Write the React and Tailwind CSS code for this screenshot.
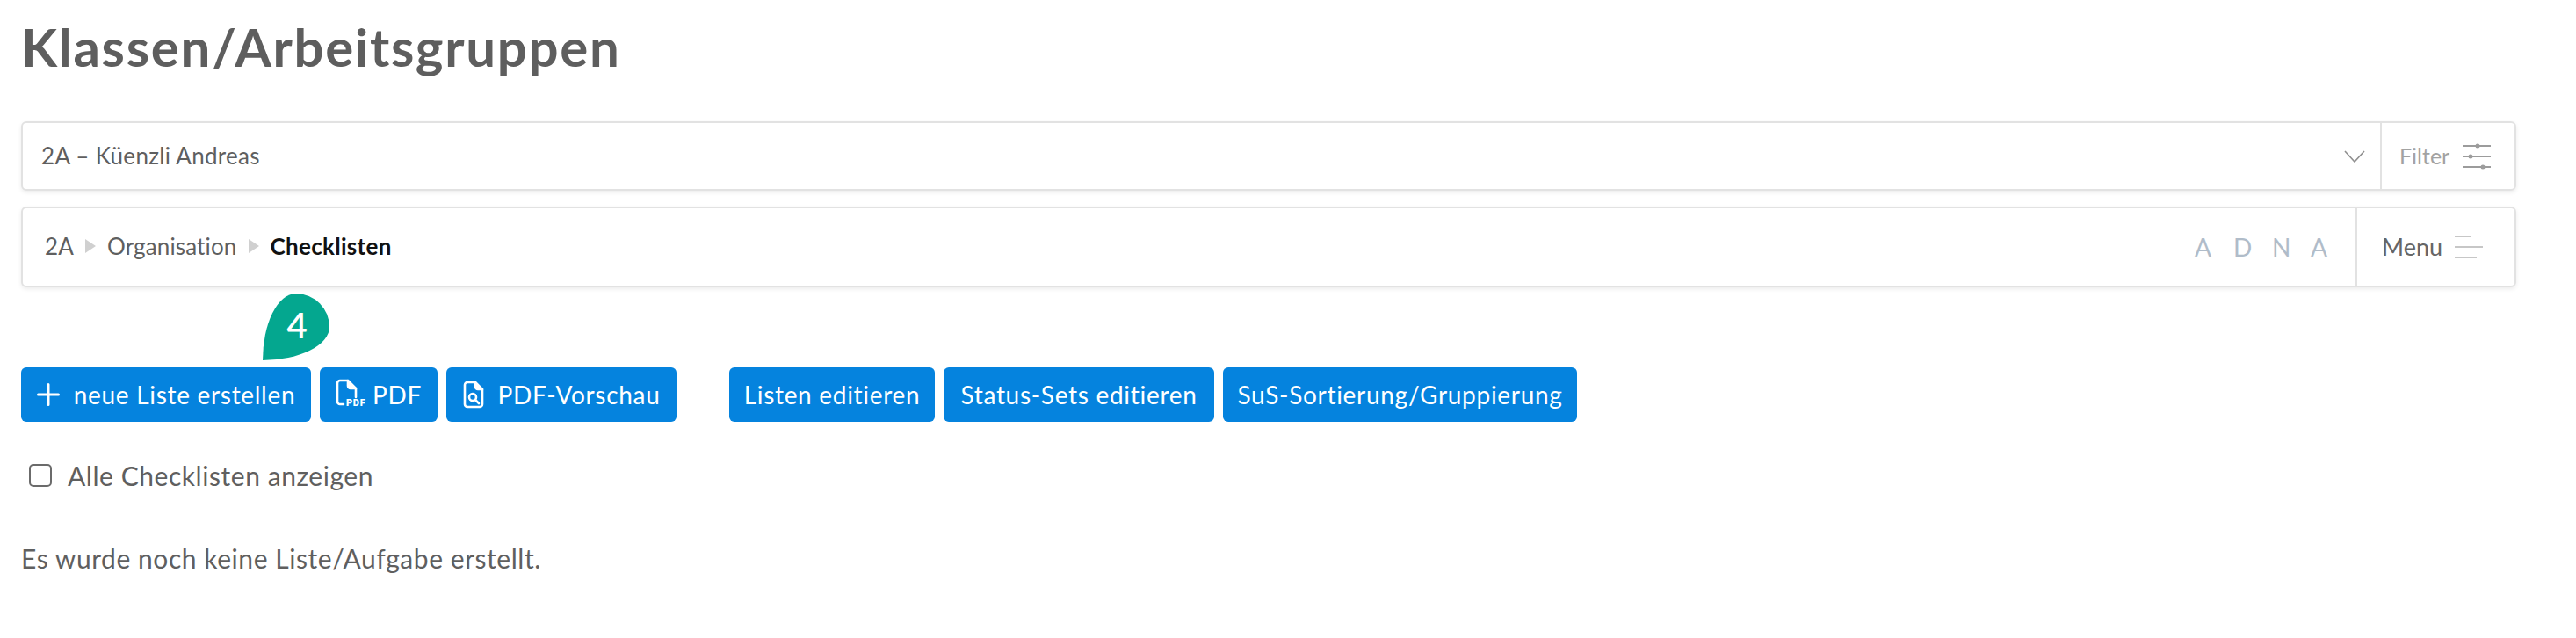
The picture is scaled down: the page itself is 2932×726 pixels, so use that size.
import React from "react";

const SANS = "font-['Lato','Liberation_Sans',sans-serif]";

const Btn = ({ w, gap = "gap-[9px]", children }) => (
  <button className={`flex h-[62px] ${w} ${gap} items-center justify-center rounded-[6px] bg-[#0583de] text-[28px] tracking-[0.7px] text-white`}>
    {children}
  </button>
);

const PdfIcon = () => (
  <svg width="36" height="38" viewBox="0 0 36 38" fill="none" stroke="white" strokeWidth="2.6" strokeLinejoin="round" strokeLinecap="round" className="shrink-0 overflow-visible">
    <path d="M9 30H5a3 3 0 0 1-3-3V6a3 3 0 0 1 3-3h9l9 9v10" />
    <path d="M14 3v6a3 3 0 0 0 3 3h6" fill="white" />
    <text x="12" y="32" fontSize="11" fontWeight="900" fill="white" stroke="none" fontFamily="Roboto, sans-serif">PDF</text>
  </svg>
);

const PdfPreviewIcon = () => (
  <svg width="24" height="32" viewBox="0 0 24 32" fill="none" stroke="white" strokeWidth="2.6" strokeLinejoin="round" strokeLinecap="round" className="shrink-0">
    <path d="M14 2H5a3 3 0 0 0-3 3v22a3 3 0 0 0 3 3h14a3 3 0 0 0 3-3V10z" />
    <path d="M14 2v5a3 3 0 0 0 3 3h5" fill="white" />
    <circle cx="11" cy="19" r="4" />
    <path d="M14.5 22.5l3.5 3.5" />
  </svg>
);

const Triangle = () => (
  <span className="h-0 w-0 border-y-[8px] border-l-[12px] border-y-transparent border-l-[#d0d0d0]" />
);

const App = () => {
  return (
    <div className={`relative min-h-[726px] bg-white px-6 text-[#5f5f5f] ${SANS}`}>
      <h1 className="h-[138px] pt-[15px] text-[60px] font-bold leading-[76px] tracking-[1.7px] text-[#5e5e5e]">
        Klassen/Arbeitsgruppen
      </h1>

      <div className="mr-[44px] flex h-[79px] items-center rounded-[6px] border-2 border-[#e2e2e2] bg-white shadow-[0_2px_5px_rgba(0,0,0,0.08)]">
        <span className="flex-1 pl-[21px] text-[26px] tracking-[0.3px] text-[#5f5f5f]">2A – Küenzli Andreas</span>
        <svg width="24" height="14" viewBox="0 0 24 14" fill="none" stroke="#8f8f8f" strokeWidth="1.6" className="mr-[17px]">
          <path d="M1 1l11 12L23 1" />
        </svg>
        <div className="flex h-full w-[153px] items-center border-l-2 border-[#e2e2e2] pl-[20px]">
          <span className="text-[25px] text-[#a2a2a2]">Filter</span>
          <svg width="32" height="30" viewBox="0 0 32 30" className="ml-[15px]" stroke="#9c9c9c" fill="#9c9c9c" strokeWidth="2">
            <path d="M0 3h32M0 15h32M0 27h32" />
            <circle cx="17" cy="3" r="2.5" stroke="none" />
            <circle cx="9" cy="15" r="2.5" stroke="none" />
            <circle cx="23" cy="27" r="2.5" stroke="none" />
          </svg>
        </div>
      </div>

      <div className="mr-[44px] mt-[18px] flex h-[92px] items-center rounded-[6px] border-2 border-[#e2e2e2] bg-white shadow-[0_2px_5px_rgba(0,0,0,0.08)]">
        <div className="flex flex-1 -translate-y-px items-center gap-[13px] pl-[25px] text-[26px] tracking-[0.15px] text-[#5f5f5f]">
          <span>2A</span>
          <Triangle />
          <span>Organisation</span>
          <Triangle />
          <span className="font-bold tracking-[0.3px] text-[#111111]">Checklisten</span>
        </div>
        <div className="mr-[33px] flex gap-[26px] text-[28px] text-[#b0bcc9]">
          <span className="w-[18px] text-center">A</span>
          <span className="w-[18px] text-center">D</span>
          <span className="w-[18px] text-center">N</span>
          <span className="w-[18px] text-center">A</span>
        </div>
        <div className="flex h-full w-[181px] items-center border-l-2 border-[#e2e2e2] pl-[28px]">
          <span className="text-[27px] text-[#666666]">Menu</span>
          <svg width="32" height="28" viewBox="0 0 32 28" className="ml-[14px]" stroke="#b5b5b5" strokeWidth="1.6">
            <path d="M0 2h19M0 14h32M0 26h25" />
          </svg>
        </div>
      </div>

      <div className="absolute left-[299px] top-[334px] flex h-[76px] w-[76px] items-center justify-center rounded-[50%_50%_100%_0/100%_50%_50%_0] bg-[#04a78f] pb-[5px] pl-[2px] text-[40px] font-semibold text-white">
        4
      </div>

      <div className="mt-[91px] flex">
        <div className="flex gap-[10px]">
          <Btn w="w-[330px]" gap="gap-[16px]">
            <svg width="26" height="26" viewBox="0 0 26 26" stroke="white" strokeWidth="3" strokeLinecap="round" className="shrink-0">
              <path d="M13 1.5v23M1.5 13h23" />
            </svg>
            <span>neue Liste erstellen</span>
          </Btn>
          <Btn w="w-[134px]" gap="gap-[6px]">
            <PdfIcon />
            <span>PDF</span>
          </Btn>
          <Btn w="w-[262px]" gap="gap-[16px]">
            <PdfPreviewIcon />
            <span>PDF-Vorschau</span>
          </Btn>
        </div>
        <div className="ml-[60px] flex gap-[10px]">
          <Btn w="w-[234px]">Listen editieren</Btn>
          <Btn w="w-[308px]">Status-Sets editieren</Btn>
          <Btn w="w-[403px]">SuS-Sortierung/Gruppierung</Btn>
        </div>
      </div>

      <label className="mt-[45px] flex h-[32px] items-center pl-[9px] text-[30px] tracking-[0.55px] text-[#5f5f5f]">
        <span className="h-[26px] w-[26px] rounded-[5px] border-2 border-[#6b6b6b] bg-white" />
        <span className="ml-[18px]">Alle Checklisten anzeigen</span>
      </label>

      <p className="mt-[56px] text-[30px] tracking-[0.55px] text-[#5f5f5f]">Es wurde noch keine Liste/Aufgabe erstellt.</p>
    </div>
  );
};

export default App;
